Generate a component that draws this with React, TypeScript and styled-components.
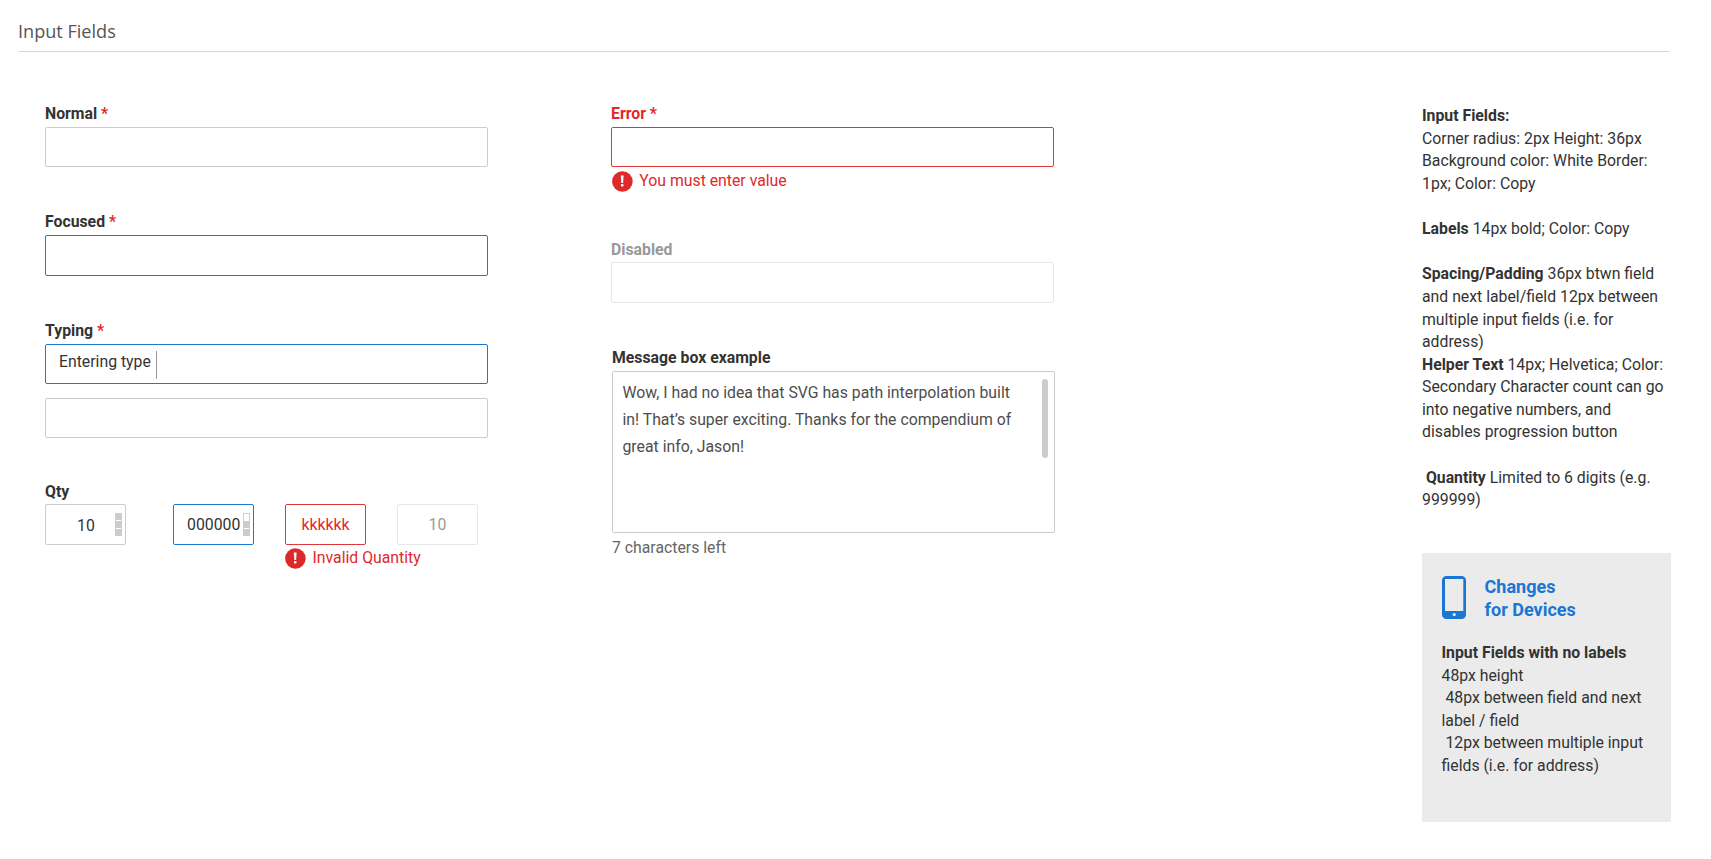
import React from "react";
import styled, { createGlobalStyle } from "styled-components";

type Tone = "normal" | "focus" | "error" | "disabled";

const border: Record<Tone, string> = {
  normal: "#cccccc",
  focus: "#1c7bd0",
  error: "#e0383a",
  disabled: "#e8e8e8",
};

const ink: Record<Tone, string> = {
  normal: "#333333",
  focus: "#333333",
  error: "#de292b",
  disabled: "#999999",
};

const GlobalStyle = createGlobalStyle`
  *, *::before, *::after { box-sizing: border-box; }
  body {
    margin: 0;
    background: #ffffff;
    color: #333333;
    font-family: Roboto, "Liberation Sans", sans-serif;
    font-size: 15.8px;
    line-height: 22.57px;
  }
`;

const Page = styled.main`
  width: 1711px;
  height: 859px;
  padding: 0 41px 0 17.500px;
  overflow: hidden;
`;

const Title = styled.h1`
  margin: 0;
  height: 52px;
  padding: 19px 0 0 0.5px;
  border-bottom: 1px solid #d9d9d9;
  font: 400 18.1px/25px "Open Sans", "Noto Sans", sans-serif;
  color: #555555;
`;

const Columns = styled.div`
  display: flex;
  align-items: flex-start;
  padding: 50px 0 0 27.5px;
`;

const Column = styled.section<{ $gap: number }>`
  flex: none;
  width: 443px;
  margin-right: ${(p) => p.$gap}px;
`;

const Field = styled.div<{ $after?: number; $indent?: number }>`
  margin-bottom: ${(p) => p.$after ?? 0}px;
  margin-left: ${(p) => p.$indent ?? 0}px;
`;

const Label = styled.label<{ $tone?: Tone; $drop?: number }>`
  display: block;
  height: 25px;
  padding-top: ${(p) => p.$drop ?? 1}px;
  font-weight: 700;
  color: ${(p) => ink[p.$tone ?? "normal"]};
  white-space: nowrap;
`;

const Star = styled.span`
  color: #e0292b;
`;

const Box = styled.div<{ $tone?: Tone; $height?: number }>`
  display: flex;
  width: 443px;
  height: ${(p) => p.$height ?? 41}px;
  padding: 6px 13px 0;
  border: 1px solid ${(p) => border[p.$tone ?? "normal"]};
  border-radius: 2px;
  background: #ffffff;
`;

const SecondBox = styled(Box)`
  margin-top: 14px;
`;

const Caret = styled.span`
  width: 1px;
  height: 28px;
  margin: 0 0 0 5px;
  background: #999999;
`;

const Hint = styled.div<{ $top: number; $inset?: number }>`
  display: flex;
  align-items: center;
  gap: 6.500px;
  padding-left: ${(p) => p.$inset ?? 0}px;
  margin-top: ${(p) => p.$top}px;
  height: 22px;
  color: #de292b;
  white-space: nowrap;

  svg {
    flex: none;
  }
`;

const HintText = styled.span`
  padding-top: 1.500px;
`;

const QtyRow = styled.div`
  display: flex;
  align-items: flex-start;
`;

const QtyCell = styled.div<{ $after: number }>`
  width: 81px;
  margin-right: ${(p) => p.$after}px;
`;

const QtyBox = styled.div<{ $tone?: Tone; $left: number; $top?: number }>`
  display: flex;
  justify-content: space-between;
  height: 41px;
  padding: ${(p) => p.$top ?? 9}px 3px 0 ${(p) => p.$left}px;
  border: 1px solid ${(p) => border[p.$tone ?? "normal"]};
  border-radius: 2px;
  color: ${(p) => ink[p.$tone ?? "normal"]};
`;

const Stepper = styled.svg<{ $lift?: number }>`
  flex: none;
  width: 7px;
  height: 23px;
  margin-top: -${(p) => p.$lift ?? 1}px;
`;

const MessageBox = styled.div`
  display: flex;
  justify-content: space-between;
  width: 443px;
  height: 162px;
  padding: 7px 6px 0 9.500px;
  border: 1px solid #cccccc;
  border-radius: 2px;
  color: #4d4d4d;
`;

const Message = styled.p`
  margin: 0;
  line-height: 27.1px;
  white-space: nowrap;
`;

const Thumb = styled.div`
  width: 6px;
  height: 79px;
  border-radius: 3px;
  background: #cccccc;
`;

const Counter = styled.div`
  margin-top: 4px;
  color: #666666;
`;

const Aside = styled.aside`
  flex: none;
  width: 249px;
  padding-top: 3px;
`;

const Notes = styled.div`
  height: 448px;
  padding-top: 0.3px;
`;

const Line = styled.div`
  height: 22.59px;
  line-height: 22.59px;
  white-space: pre;
`;

const DevicePanel = styled.div`
  height: 269px;
  padding: 23px 19px 0 19.5px;
  background: #ebebeb;
`;

const DeviceHead = styled.div`
  display: flex;
  height: 66px;
  gap: 19px;
`;

const DeviceTitle = styled.h2`
  margin: 0;
  font-size: 18.05px;
  font-weight: 700;
  line-height: 22.57px;
  color: #1976d2;
`;

const ErrorIcon = () => (
  <svg width="21" height="21" viewBox="0 0 21 21">
    <circle cx="10.4" cy="10.5" r="10.3" fill="#de292b" />
    <path d="M8.800 4.400h2.800l-.5 7.600H9.300z" fill="#ffffff" />
    <rect x="9" y="13.100" width="2.400" height="2.300" fill="#ffffff" />
  </svg>
);

const PhoneIcon = () => (
  <svg width="24" height="43" viewBox="0 0 24 43">
    <path
      fillRule="evenodd"
      fill="#1976d2"
      d="M4.500 0h15A4.500 4.500 0 0 1 24 4.500v34a4.500 4.500 0 0 1-4.500 4.500h-15A4.500 4.500 0 0 1 0 38.500v-34A4.500 4.500 0 0 1 4.500 0zM3 3v32h18.300V3z"
    />
    <circle cx="12.200" cy="38.600" r="1.600" fill="#ebebeb" />
  </svg>
);

const StepperBars = ({ open, lift }: { open?: boolean; lift?: number }) => (
  <Stepper $lift={lift} viewBox="0 0 7 23">
    <rect width="7" height="23" fill="#cccccc" />
    {open ? (
      <rect x="1" y="1" width="5" height="7" fill="#ffffff" />
    ) : (
      <rect x="1" y="7" width="5" height="1" fill="#ffffff" />
    )}
    <rect x="1" y="15" width="5" height="1" fill="#ffffff" />
  </Stepper>
);

export default function App() {
  return (
    <Page>
      <GlobalStyle />
      <Title>Input Fields</Title>
      <Columns>
        <Column $gap={123}>
          <Field $after={43}>
            <Label>
              Normal <Star>*</Star>
            </Label>
            <Box $height={40} />
          </Field>
          <Field $after={43}>
            <Label>
              Focused <Star>*</Star>
            </Label>
            <Box $tone="focus" />
          </Field>
          <Field $after={41}>
            <Label>
              Typing <Star>*</Star>
            </Label>
            <Box $tone="focus" $height={40}>
              Entering type
              <Caret />
            </Box>
            <SecondBox $height={40} />
          </Field>
          <Label $drop={2}>Qty</Label>
          <QtyRow>
            <QtyCell $after={47}>
              <QtyBox $left={31} $top={10}>
                10 <StepperBars lift={2} />
              </QtyBox>
            </QtyCell>
            <QtyCell $after={31}>
              <QtyBox $tone="focus" $left={13}>
                000000 <StepperBars open />
              </QtyBox>
            </QtyCell>
            <QtyCell $after={31}>
              <QtyBox $tone="error" $left={15.5}>
                kkkkkk
              </QtyBox>
              <Hint $top={2}>
                <ErrorIcon />
                <HintText>Invalid Quantity</HintText>
              </Hint>
            </QtyCell>
            <QtyCell $after={0}>
              <QtyBox $tone="disabled" $left={30.5}>
                10
              </QtyBox>
            </QtyCell>
          </QtyRow>
        </Column>

        <Column $gap={368}>
          <Field $after={45}>
            <Label $tone="error">Error *</Label>
            <Box $tone="error" $height={40} />
            <Hint $top={3} $inset={0.8}>
              <ErrorIcon />
              <HintText>You must enter value</HintText>
            </Hint>
          </Field>
          <Field $after={43}>
            <Label $tone="disabled" $drop={2}>
              Disabled
            </Label>
            <Box $tone="disabled" />
          </Field>
          <Field $indent={1}>
            <Label>Message box example</Label>
            <MessageBox>
              <Message>
                Wow, I had no idea that SVG has path interpolation built
                <br />
                in! That’s super exciting. Thanks for the compendium of
                <br />
                great info, Jason!
              </Message>
              <Thumb />
            </MessageBox>
            <Counter>7 characters left</Counter>
          </Field>
        </Column>

        <Aside>
          <Notes>
            <Line>
              <b>Input Fields:</b>
            </Line>
            <Line>Corner radius: 2px Height: 36px</Line>
            <Line>Background color: White Border:</Line>
            <Line>1px; Color: Copy</Line>
            <Line />
            <Line>
              <b>Labels</b> 14px bold; Color: Copy
            </Line>
            <Line />
            <Line>
              <b>Spacing/Padding</b> 36px btwn field
            </Line>
            <Line>and next label/field 12px between</Line>
            <Line>multiple input fields (i.e. for</Line>
            <Line>address)</Line>
            <Line>
              <b>Helper Text</b> 14px; Helvetica; Color:
            </Line>
            <Line>Secondary Character count can go</Line>
            <Line>into negative numbers, and</Line>
            <Line>disables progression button</Line>
            <Line />
            <Line>
              {" "}
              <b>Quantity</b> Limited to 6 digits (e.g.
            </Line>
            <Line>999999)</Line>
          </Notes>
          <DevicePanel>
            <DeviceHead>
              <PhoneIcon />
              <DeviceTitle>
                Changes
                <br />
                for Devices
              </DeviceTitle>
            </DeviceHead>
            <Line>
              <b>Input Fields with no labels</b>
            </Line>
            <Line>48px height</Line>
            <Line>{" 48px between field and next"}</Line>
            <Line>label / field</Line>
            <Line>{" 12px between multiple input"}</Line>
            <Line>fields (i.e. for address)</Line>
          </DevicePanel>
        </Aside>
      </Columns>
    </Page>
  );
}
